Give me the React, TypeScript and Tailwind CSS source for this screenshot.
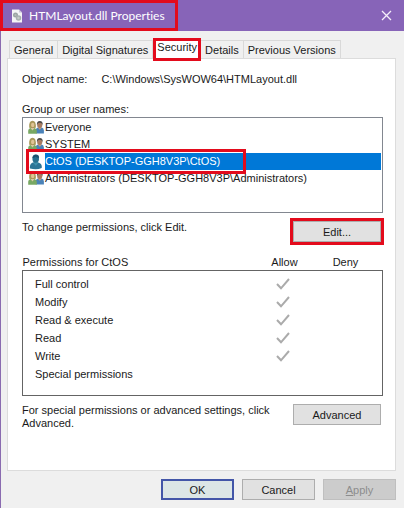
import React, { useState } from 'react';

const tabs = ['General', 'Digital Signatures', 'Security', 'Details', 'Previous Versions'];

const users = [
  { name: 'Everyone', group: true },
  { name: 'SYSTEM', group: true },
  { name: 'CtOS (DESKTOP-GGH8V3P\\CtOS)', group: false },
  { name: 'Administrators (DESKTOP-GGH8V3P\\Administrators)', group: true },
];

const permissions = [
  { label: 'Full control', allow: true },
  { label: 'Modify', allow: true },
  { label: 'Read & execute', allow: true },
  { label: 'Read', allow: true },
  { label: 'Write', allow: true },
  { label: 'Special permissions', allow: false },
];

const FileIcon = () => (
  <svg width="12" height="14" viewBox="0 0 12 14" aria-hidden="true">
    <path d="M1 0.5h7l3 3v10H1z" fill="#f4f4f6" />
    <path d="M8 0.5v3h3z" fill="#c9c4d6" />
    <circle cx="4.5" cy="6" r="1.8" fill="#b5bcb9" stroke="#9aa3a3" strokeWidth="1.4" />
    <circle cx="7.5" cy="9" r="2" fill="#c5cbc8" stroke="#a9b0b0" strokeWidth="1.5" />
  </svg>
);

const GroupIcon = () => (
  <svg width="16" height="15" viewBox="0 0 16 15" aria-hidden="true">
    <path d="M7.8 13.6V10q0-1.8 2-2.4h4q2 .6 2.100 3v3z" fill="#4a82b8" />
    <path d="M10.400 7.300h2.600l.3 1-1.500 1.500-1.500-1.500z" fill="#c99a78" />
    <ellipse cx="11.700" cy="4.900" rx="2.600" ry="3" fill="#a87c62" />
    <path d="M8.900 5q-.3-4.100 2.900-4.100t2.900 4q-.9-2.100-2.900-2.200-2 .1-2.900 2.300z" fill="#4c4a48" />
    <path d="M.2 13.700v-3q.1-2.400 2.300-2.800h3.900q2.300.5 2.400 2.800v3z" fill="#78a863" />
    <path d="M3.300 7h2.300l.5 1.500-1.600 2-1.700-2z" fill="#dcc8a4" />
    <path d="M1.200 7.800Q.7.800 4.500.7t3.300 7.100l-1.700.2H3z" fill="#a8985a" />
    <ellipse cx="4.700" cy="5" rx="1.700" ry="2.300" fill="#dfc496" />
  </svg>
);

const UserIcon = () => (
  <svg width="16" height="16" viewBox="0 0 16 16" aria-hidden="true">
    <path d="M2 14.500q-.7-4.800 2.800-6h5.600q4 1.200 3.300 5.500-5 2.200-11.700.5z" fill="#2c7596" />
    <path d="M6 7.500h3.500l.7 1.600-2.400 2.700-2.400-2.700z" fill="#3f91ad" />
    <ellipse cx="7.700" cy="4.700" rx="3.300" ry="4" fill="#28708e" />
    <path d="M4.400 4Q4.700.5 7.900.5t3.200 3.400Q8.300 3.700 7.500 2.800 6.200 4.200 4.400 4z" fill="#1d526f" />
  </svg>
);

const CloseIcon = () => (
  <svg width="11" height="11" viewBox="0 0 11 11" stroke="#f5effa" strokeWidth="1.3" aria-hidden="true">
    <path d="M1 1l9 9M10 1l-9 9" />
  </svg>
);

const CheckIcon = () => (
  <svg width="14" height="12" viewBox="0 0 14 12" fill="none" stroke="#ababab" strokeWidth="2" aria-hidden="true">
    <path d="M1 6l4 4.300L13 1" />
  </svg>
);

// Red frame drawn over the item it calls out
const Highlight = ({ className }: { className: string }) => (
  <span className={`pointer-events-none absolute z-10 border-3 border-[#e30b1c] ${className}`} />
);

const buttonStyle = 'h-[21px] border border-[#adadad] bg-[#e1e1e1] text-center';

const PermissionMark = ({ label, checked }: { label: string; checked: boolean }) => (
  <label className="relative flex h-[18px] items-center justify-center">
    <input type="checkbox" aria-label={label} checked={checked} disabled className="sr-only" />
    {checked && <CheckIcon />}
  </label>
);

const App: React.FC = () => {
  const [activeTab, setActiveTab] = useState('Security');
  const [selected, setSelected] = useState(2);

  return (
    <div className="min-h-screen border-l border-[#8a6bb0] bg-[#f0f0f0] font-['Liberation_Sans',sans-serif] text-[11px] leading-4 text-[#1a1a1a]">
      <header className="-ml-px flex h-[31px] items-center justify-between bg-[#8764b8]">
        <h1 className="flex h-full w-[178px] items-center gap-1.5 border-3 border-[#e30b1c] pl-2 font-['Lato','Open_Sans',sans-serif] text-xs text-white [font-variant-ligatures:none]">
          <FileIcon />
          HTMLayout.dll Properties
        </h1>
        <button aria-label="Close" className="px-3 py-2">
          <CloseIcon />
        </button>
      </header>

      <main className="pt-2 pr-2 pl-1.5">
        <div role="tablist" className="flex items-end pl-0.5">
          {tabs.map((tab) => (
            <button
              key={tab}
              role="tab"
              aria-selected={tab === activeTab}
              onClick={() => setActiveTab(tab)}
              className={
                tab === activeTab
                  ? 'relative h-[19px] bg-white px-1 pb-1'
                  : 'h-[18px] border-t border-r border-[#d9d9d9] px-1 first:border-l'
              }
            >
              {tab}
              {tab === 'Security' && <Highlight className="inset-x-0 -top-px -bottom-[3px]" />}
            </button>
          ))}
        </div>

        <section className="border border-[#dcdcdc] bg-white pt-3 pr-3 pb-10 pl-3.5">
          <p className="flex gap-3.5">
            <span>Object name:</span>
            <span>C:\Windows\SysWOW64\HTMLayout.dll</span>
          </p>

          <h2 id="users-label" className="mt-3.5">Group or user names:</h2>
          <ul role="listbox" aria-labelledby="users-label" className="h-24 border border-[#828790] px-px pt-px">
            {users.map((user, i) => (
              <li
                key={user.name}
                role="option"
                aria-selected={i === selected}
                onClick={() => setSelected(i)}
                className="relative flex h-[17px] items-center pl-1 leading-[17px]"
              >
                <span className="w-[17px]">{user.group ? <GroupIcon /> : <UserIcon />}</span>
                <span className={i === selected ? 'flex-1 bg-[#0078d7] text-white' : 'flex-1'}>{user.name}</span>
                {i === 2 && <Highlight className="-inset-y-1 left-0.5 w-[220px]" />}
              </li>
            ))}
          </ul>

          <div className="mt-1.5 flex justify-between">
            <p>To change permissions, click Edit.</p>
            <div className="relative mt-0.5 mr-0.5">
              <button className={`${buttonStyle} block w-[88px]`}>Edit...</button>
              <Highlight className="-inset-[3px]" />
            </div>
          </div>

          <table className="mt-3 w-full table-fixed">
            <thead>
              <tr>
                <th scope="col" className="text-left font-normal">Permissions for CtOS</th>
                <th scope="col" className="w-[64px] pl-1 font-normal">Allow</th>
                <th scope="col" className="w-[68px] pr-1.5 font-normal">Deny</th>
              </tr>
            </thead>
            <tbody className="border border-[#646464]">
              {permissions.map((permission) => (
                <tr key={permission.label} className="align-top first:*:pt-1 last:*:pb-3">
                  <th scope="row" className="pl-3 text-left leading-[18px] font-normal">{permission.label}</th>
                  <td>
                    <PermissionMark label={`Allow ${permission.label}`} checked={permission.allow} />
                  </td>
                  <td>
                    <PermissionMark label={`Deny ${permission.label}`} checked={false} />
                  </td>
                </tr>
              ))}
            </tbody>
          </table>

          <div className="mt-2 flex justify-between">
            <p className="w-[250px] leading-[13px]">For special permissions or advanced settings, click Advanced.</p>
            <button className={`${buttonStyle} mr-0.5 w-[88px]`}>Advanced</button>
          </div>
        </section>

        <footer className="mt-2 flex justify-end gap-2">
          <button className="h-[21px] w-[73px] border-2 border-[#4356a8] bg-[#dce6e6] leading-4">OK</button>
          <button className={`${buttonStyle} w-[73px]`}>Cancel</button>
          <button disabled className="h-[21px] w-[73px] border border-[#bfbfbf] bg-[#cccccc] text-[#8c8c8c]">
            <span className="underline">A</span>pply
          </button>
        </footer>
      </main>
    </div>
  );
};

export default App;
